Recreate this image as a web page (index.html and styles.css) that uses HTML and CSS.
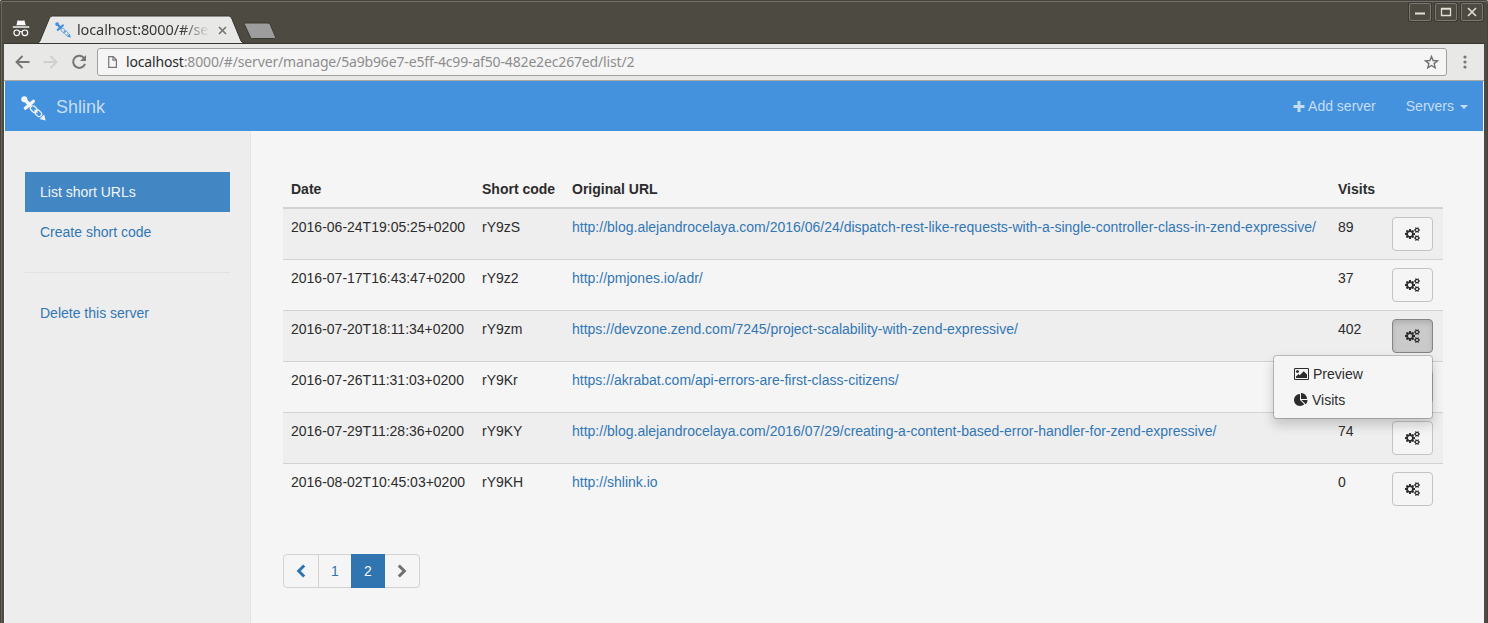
FILE: index.html
```html
<!DOCTYPE html>
<html lang="en">
<head>
<meta charset="utf-8">
<title>Shlink</title>
<link rel="stylesheet" href="styles.css">
</head>
<body>
<svg class="defs" width="0" height="0">
  <symbol id="cogs" viewBox="0 0 1920 1792"><path d="M896 896q0-106-75-181t-181-75-181 75-75 181 75 181 181 75 181-75 75-181zm768 512q0-52-38-90t-90-38-90 38-38 90q0 53 37.500 90.500t90.500 37.500 90.500-37.500 37.500-90.500zm0-1024q0-52-38-90t-90-38-90 38-38 90q0 53 37.500 90.500t90.500 37.500 90.500-37.500 37.500-90.500zm-384 421v185q0 10-7 19.500t-16 10.500l-155 24q-11 35-32 76 34 48 90 115 7 11 7 20 0 12-7 19-23 30-82.500 89.500t-78.500 59.500q-11 0-21-7l-115-90q-37 19-77 31-11 108-23 155-7 24-30 24h-186q-11 0-20-7.500t-10-17.500l-23-153q-34-10-75-31l-118 89q-7 7-20 7-11 0-21-8-144-133-144-160 0-9 7-19 10-14 41-53t47-61q-23-44-35-82l-152-24q-10-1-17-9.500t-7-19.500v-185q0-10 7-19.500t16-10.500l155-24q11-35 32-76-34-48-90-115-7-11-7-20 0-12 7-20 22-30 82-89t79-59q11 0 21 7l115 90q34-18 77-32 11-108 23-154 7-24 30-24h186q11 0 20 7.500t10 17.500l23 153q34 10 75 31l118-89q8-7 20-7 11 0 21 8 144 133 144 160 0 8-7 19-12 16-42 54t-45 60q23 48 34 82l152 23q10 2 17 10.500t7 19.500zm640 533v140q0 16-149 31-12 27-30 52 51 113 51 138 0 4-4 7-122 71-124 71-8 0-46-47t-52-68q-20 2-30 2t-30-2q-14 21-52 68t-46 47q-2 0-124-71-4-3-4-7 0-25 51-138-18-25-30-52-149-15-149-31v-140q0-16 149-31 13-29 30-52-51-113-51-138 0-4 4-7 4-2 35-20t59-34 30-16q8 0 46 46.500t52 67.500q20-2 30-2t30 2q51-71 92-112l6-2q4 0 124 70 4 3 4 7 0 25-51 138 17 23 30 52 149 15 149 31zm0-1024v140q0 16-149 31-12 27-30 52 51 113 51 138 0 4-4 7-122 71-124 71-8 0-46-47t-52-68q-20 2-30 2t-30-2q-14 21-52 68t-46 47q-2 0-124-71-4-3-4-7 0-25 51-138-18-25-30-52-149-15-149-31v-140q0-16 149-31 13-29 30-52-51-113-51-138 0-4 4-7 4-2 35-20t59-34 30-16q8 0 46 46.500t52 67.500q20-2 30-2t30 2q51-71 92-112l6-2q4 0 124 70 4 3 4 7 0 25-51 138 17 23 30 52 149 15 149 31z"/></symbol>
  <symbol id="logo" viewBox="0 0 25 25">
    <g fill="none" stroke="currentColor">
      <path d="M3.500 3.500l6.500 6.500" stroke-width="3.600"/>
      <path d="M12.500 5.200L4.300 12.300" stroke-width="3.200" stroke-linecap="round"/>
      <rect x="-3.700" y="-2.500" width="7.400" height="5" rx="2.500" transform="translate(12.700 13.100) rotate(45)" stroke-width="1.200"/>
      <rect x="-3.700" y="-2.500" width="7.400" height="5" rx="2.500" transform="translate(17.300 17.300) rotate(45)" stroke-width="1.200"/>
      <path d="M13.500 13.700l3 3" stroke-width="1.100"/>
    </g>
    <circle cx="3.300" cy="3.300" r="3" fill="currentColor"/>
    <path d="M18.600 23l4.600-4.600 1.400 6z" fill="currentColor"/>
  </symbol>
</svg>
<div class="window">
  <header class="titlebar">
    <svg class="incognito" width="18" height="17" viewBox="0 0 18 17"><path d="M5.600.3q1.700.8 3.300.2 1.600.6 3.500-.2l1.300 5H4.400z" fill="#fff"/><path d="M.8 7h16.400" stroke="#fff" stroke-width="1.400"/><g fill="none" stroke="#fff" stroke-width="1.200"><circle cx="4.700" cy="12.800" r="2.800"/><circle cx="12.900" cy="12.800" r="2.800"/><path d="M7.300 12q1.500-.9 3 0"/></g></svg>
    <div class="tab">
      <svg class="tab-shape" width="208" height="29" viewBox="0 0 208 29"><path d="M-1 28.500Q1 28 2 26L11.500 3Q12.500 1 14.500 1H190.500q2 0 3 2l9.500 23q1 2 4 2.500z" fill="#e8e8e6" stroke="#37352f"/></svg>
      <svg class="favicon" width="16" height="16"><use href="#logo"/></svg>
      <span class="tab-title">localhost:8000/#/se</span>
      <svg class="tab-close" width="9" height="9" viewBox="0 0 9 9"><path d="M1 1l7 7M8 1L1 8" stroke="#777" stroke-width="1.700"/></svg>
    </div>
    <svg class="newtab" width="34" height="18" viewBox="0 0 34 18"><path d="M2.500 1H25q1.500 0 2 1l5.500 13q.5 1.500-1 1.500H9.500q-1.500 0-2-1L1.500 2.500Q1 1 2.500 1z" fill="#9d9d9d" stroke="#3a3832"/></svg>
    <div class="controls">
      <span class="control"><svg width="12" height="10"><path d="M1 6.500h10" stroke="#e3e0d8" stroke-width="2"/></svg></span>
      <span class="control"><svg width="12" height="10"><path d="M1.500 1.500h9v7h-9zM1 2h10" fill="none" stroke="#e3e0d8" stroke-width="1.300"/></svg></span>
      <span class="control"><svg width="12" height="10"><path d="M2 1l8 8M10 1L2 9" stroke="#e3e0d8" stroke-width="1.600"/></svg></span>
    </div>
  </header>
  <div class="toolbar">
    <svg class="back" width="15" height="14" viewBox="0 0 15 14"><path d="M14.500 7H1.500M7.500 1l-6 6 6 6" fill="none" stroke="#767676" stroke-width="1.900"/></svg>
    <svg class="forward" width="15" height="14" viewBox="0 0 15 14"><path d="M.5 7h13M7.500 1l6 6-6 6" fill="none" stroke="#cfcfcd" stroke-width="1.900"/></svg>
    <svg class="reload" width="16" height="16" viewBox="0 0 16 16"><path d="M13.400 4.500A6.100 6.100 0 1 0 14 9.800" fill="none" stroke="#767676" stroke-width="2"/><path d="M15 1v6H9z" fill="#767676"/></svg>
    <div class="omnibox">
      <svg width="9" height="12" viewBox="0 0 9 12"><path d="M.7.600h4.500l3.200 3.200v7.600H.7zM5 .6v3.500h3.500" fill="none" stroke="#777" stroke-width="1.200"/></svg>
      <span class="url"><b>localhost</b>:8000/#/server/manage/5a9b96e7-e5ff-4c99-af50-482e2ec267ed/list/2</span>
      <svg class="star" width="15" height="14" viewBox="0 0 15 14"><path d="M7.500 1.500l1.600 4 4.400.3-3.400 2.800 1.100 4.200-3.700-2.300-3.700 2.300 1.100-4.200L1.500 5.800l4.400-.3z" fill="none" stroke="#717171" stroke-width="1.400"/></svg>
    </div>
    <svg class="more" width="4" height="14" viewBox="0 0 4 14"><g fill="#777"><circle cx="2" cy="2" r="1.600"/><circle cx="2" cy="7" r="1.600"/><circle cx="2" cy="12" r="1.600"/></g></svg>
  </div>
  <div class="page">
    <nav class="navbar">
      <svg class="logo" width="25" height="25"><use href="#logo"/></svg>
      <span class="brand">Shlink</span>
      <a class="nav-link add"><svg width="12" height="11" viewBox="0 0 12 11"><path d="M6 0v11M.5 5.500h11" stroke="currentColor" stroke-width="3"/></svg>Add server</a>
      <a class="nav-link">Servers<i class="caret"></i></a>
    </nav>
    <div class="body">
      <aside class="sidebar">
        <a class="side-link active">List short URLs</a>
        <a class="side-link">Create short code</a>
        <hr class="divider">
        <a class="side-link">Delete this server</a>
      </aside>
      <main class="main">
        <div class="table">
          <div class="row head"><span>Date</span><span>Short code</span><span>Original URL</span><span>Visits</span><span></span></div>
          <div class="row odd"><span>2016-06-24T19:05:25+0200</span><span>rY9zS</span><a>http://blog.alejandrocelaya.com/2016/06/24/dispatch-rest-like-requests-with-a-single-controller-class-in-zend-expressive/</a><span>89</span><div><button class="btn"><svg width="15" height="14"><use href="#cogs"/></svg></button></div></div>
          <div class="row"><span>2016-07-17T16:43:47+0200</span><span>rY9z2</span><a>http://pmjones.io/adr/</a><span>37</span><div><button class="btn"><svg width="15" height="14"><use href="#cogs"/></svg></button></div></div>
          <div class="row odd"><span>2016-07-20T18:11:34+0200</span><span>rY9zm</span><a>https://devzone.zend.com/7245/project-scalability-with-zend-expressive/</a><span>402</span>
            <div class="dropdown"><button class="btn open"><svg width="15" height="14"><use href="#cogs"/></svg></button>
              <div class="menu">
                <a class="menu-item"><svg width="15" height="14" viewBox="0 0 1920 1792"><path d="M640 576q0 80-56 136t-136 56-136-56-56-136 56-136 136-56 136 56 56 136zm1024 384v448h-1408v-192l320-320 160 160 512-512zm96-704h-1600q-13 0-22.500 9.500t-9.500 22.500v1216q0 13 9.500 22.500t22.500 9.500h1600q13 0 22.500-9.500t9.500-22.500v-1216q0-13-9.500-22.500t-22.500-9.500zm160 32v1216q0 66-47 113t-113 47h-1600q-66 0-113-47t-47-113v-1216q0-66 47-113t113-47h1600q66 0 113 47t47 113z"/></svg>Preview</a>
                <a class="menu-item"><svg width="14" height="14" viewBox="0 0 1792 1792"><path d="M768 890l546 546q-106 108-247.500 168t-298.500 60q-209 0-385.500-103t-279.500-279.500-103-385.500 103-385.500 279.500-279.500 385.500-103v762zm187 6h773q0 157-60 298.500t-168 247.500zm709-128h-768v-768q209 0 385.500 103t279.500 279.500 103 385.500z"/></svg>Visits</a>
              </div>
            </div>
          </div>
          <div class="row"><span>2016-07-26T11:31:03+0200</span><span>rY9Kr</span><a>https://akrabat.com/api-errors-are-first-class-citizens/</a><span></span><div><button class="btn"><svg width="15" height="14"><use href="#cogs"/></svg></button></div></div>
          <div class="row odd"><span>2016-07-29T11:28:36+0200</span><span>rY9KY</span><a>http://blog.alejandrocelaya.com/2016/07/29/creating-a-content-based-error-handler-for-zend-expressive/</a><span>74</span><div><button class="btn"><svg width="15" height="14"><use href="#cogs"/></svg></button></div></div>
          <div class="row"><span>2016-08-02T10:45:03+0200</span><span>rY9KH</span><a>http://shlink.io</a><span>0</span><div><button class="btn"><svg width="15" height="14"><use href="#cogs"/></svg></button></div></div>
        </div>
        <div class="pagination">
          <a class="pg prev"><svg width="10" height="14" viewBox="0 0 10 14"><path d="M8.200 1.500L2.700 7l5.500 5.500" fill="none" stroke="currentColor" stroke-width="3"/></svg></a>
          <a class="pg">1</a>
          <a class="pg current">2</a>
          <a class="pg next"><svg width="10" height="14" viewBox="0 0 10 14"><path d="M1.800 1.500L7.300 7l-5.500 5.500" fill="none" stroke="currentColor" stroke-width="3"/></svg></a>
        </div>
      </main>
    </div>
  </div>
</div>
</body>
</html>
```
FILE: styles.css
```css
* { box-sizing: border-box; }
html { background: #fff; }
body { margin: 0; overflow: hidden; font: 14px/20px "Liberation Sans", Arial, sans-serif; color: #2c2c2c; }
svg { display: block; flex: none; }
.defs { position: absolute; }
.window {
  width: 1488px; height: 623px; display: flex; flex-direction: column;
  padding: 0 4px; background: #4d4a41; border-radius: 3px 3px 0 0;
  box-shadow: inset 0 1px #45433c, inset 0 2px #716f69, inset 1px 0 #45433c, inset 2px 0 #68665d, inset -1px 0 #45433c;
}
.titlebar { height: 44px; display: flex; align-items: flex-start; border-bottom: 1px solid #37352f; flex: none; }
.incognito { margin: 20px 0 0 8px; }
.tab { display: grid; grid-template-columns: 208px; margin: 15px 0 0 8px; height: 29px; }
.tab > * { grid-area: 1 / 1; }
.tab-shape { overflow: visible; }
.favicon { color: #4491e0; margin: 7px 0 0 17px; }
.tab-title {
  margin: 4px 0 0 39px; width: 133px; height: 20px; overflow: hidden; white-space: nowrap;
  font: 14.500px/20px "Noto Sans", sans-serif; letter-spacing: -.12px;
  background: linear-gradient(90deg, #333 0 104px, rgba(51,51,51,0) 133px); -webkit-background-clip: text; background-clip: text; color: transparent;
}
.tab-close { margin: 11px 0 0 180px; }
.newtab { margin: 22px 0 0 -3px; }
.controls { display: flex; gap: 4px; margin: 3px 1px 0 auto; }
.control { width: 22px; height: 18px; border: 1px solid #7b7870; border-radius: 2px; box-shadow: 0 0 0 1px #3b3933; display: flex; align-items: center; justify-content: center; }
.toolbar { height: 37px; flex: none; display: flex; align-items: center; background: #e8e8e6; border-bottom: 1px solid #aaa9a5; }
.back { margin-left: 11px; }
.forward { margin-left: 13px; }
.reload { margin-left: 13px; }
.omnibox { width: 1350px; height: 28px; margin-left: 10px; padding: 0 7px 0 10px; border: 1px solid #a0a09e; border-radius: 3px; background: #f5f5f5; display: flex; align-items: center; }
.url { margin-left: 9px; font: 14px/20px "Noto Sans", sans-serif; letter-spacing: -.155px; color: #8d8d8d; white-space: nowrap; }
.url b { font-weight: 400; color: #2b2b2b; }
.star { margin-left: auto; }
.more { margin-left: 16px; }
.page { flex: 1; min-height: 0; display: flex; flex-direction: column; background: #f5f5f5; padding: 0 1px; }
.navbar { height: 50px; flex: none; display: flex; align-items: center; background: #4491de; color: #c6def4; padding: 0 15px; }
.logo { color: #f3f7fb; margin: 4px 0 0 1px; }
.brand { font-size: 18px; margin: 2px auto 0 10px; }
.nav-link { display: flex; align-items: center; }
.add { margin-right: 30px; gap: 3px; }
.caret { border: 4px solid transparent; border-top-color: currentColor; border-bottom: 0; margin: 2px 0 0 6px; }
.body { flex: 1; display: flex; }
.sidebar { width: 246px; padding: 41px 20px 0; background: #ededed; border-right: 1px solid #e5e5e5; }
.side-link { display: block; padding: 10px 15px; color: #3277b5; }
.side-link.active { background: #4287c4; color: #f3f5f7; }
.divider { border: 0; border-top: 1px solid #e2e2e2; margin: 20px 0; }
.main { flex: 1; padding: 40px 40px 0 32px; }
.row { display: grid; grid-template-columns: 191px 90px 766px 54px 59px; height: 51px; padding-top: 8px; border-bottom: 1px solid #d2d2d2; }
.row > * { padding-left: 8px; white-space: nowrap; }
.row a { color: #3277b5; }
.row.head { height: 38px; border-bottom-width: 2px; font-weight: 700; }
.row.odd { background: #eee; }
.row:last-child { border-bottom-color: transparent; }
.btn { display: flex; align-items: center; justify-content: center; width: 41px; height: 34px; padding: 0; border: 1px solid #c3c3c3; border-radius: 4px; background: #f5f5f5; color: #2c2c2c; fill: currentColor; }
.btn.open { background: #cacaca; border-color: #858585; box-shadow: inset 0 3px 5px rgba(0,0,0,.125); }
.dropdown { position: relative; }
.menu { position: absolute; z-index: 2; top: 36px; right: 10px; width: 160px; height: 64px; padding: 5px 0; background: #f5f5f5; background-clip: padding-box; border: 1px solid rgba(0,0,0,.2); border-radius: 4px; box-shadow: 0 6px 12px rgba(0,0,0,.175); }
.row .menu-item { display: flex; align-items: center; gap: 4px; height: 26px; padding-left: 20px; color: #2c2c2c; fill: currentColor; }
.pagination { display: flex; width: 137px; height: 34px; margin-top: 39px; border: 1px solid #d2d2d2; border-radius: 4px; color: #2f74b0; }
.pg { width: 32px; display: flex; align-items: center; justify-content: center; }
.prev { width: 35px; border-right: 1px solid #d2d2d2; }
.current { width: 34px; margin: -1px 0; background: #3075b0; color: #f3f5f7; }
.next { width: 33px; color: #707070; }
```
